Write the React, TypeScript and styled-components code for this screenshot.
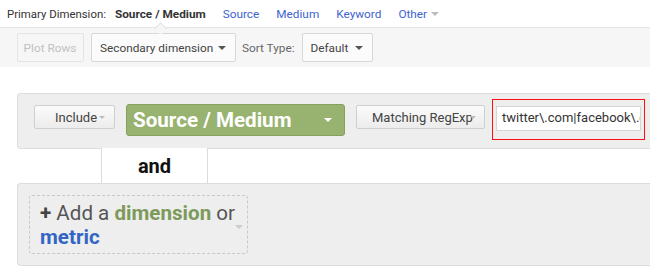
import React from "react";
import styled, { createGlobalStyle } from "styled-components";

const Global = createGlobalStyle`
  html, body { margin: 0; padding: 0; background: #fff; overflow: hidden; }
  body { font-family: Roboto, "Liberation Sans", Arial, sans-serif; width: 650px; height: 266px; }
`;

const Page = styled.div`
  width: 650px;
  height: 266px;
  overflow: hidden;
`;

const Header = styled.div`
  height: 27px;
  display: flex;
  align-items: center;
  padding-left: 7px;
  font-size: 11.8px;
  color: #333;
  white-space: nowrap;
`;

const Label = styled.span`
  font-size: 11.4px;
  margin-right: 9px;
`;

const DimLink = styled.span<{ $active?: boolean }>`
  margin-right: 17px;
  color: ${(p) => (p.$active ? "#333" : "#3e63cf")};
  font-weight: ${(p) => (p.$active ? 700 : 400)};
  position: relative;
  display: inline-flex;
  align-items: center;
`;

const Notch = styled.span`
  position: absolute;
  left: 50%;
  bottom: -12px;
  width: 8px;
  height: 8px;
  margin-left: -4px;
  background: #f6f6f6;
  border-left: 1px solid #e2e2e2;
  border-top: 1px solid #e2e2e2;
  transform: rotate(45deg);
`;

const Caret = styled.span<{ $color?: string; $size?: number; $gap?: number }>`
  display: inline-block;
  flex-shrink: 0;
  width: 0;
  height: 0;
  border-left: ${(p) => p.$size ?? 4}px solid transparent;
  border-right: ${(p) => p.$size ?? 4}px solid transparent;
  border-top: ${(p) => p.$size ?? 4}px solid ${(p) => p.$color ?? "#bbb"};
  margin-left: ${(p) => p.$gap ?? 4}px;
  position: relative;
`;

const Toolbar = styled.div`
  height: 40px;
  background: #f6f6f6;
  border-top: 1px solid #e6e6e6;
  display: flex;
  align-items: center;
  padding-left: 17px;
  box-sizing: border-box;
  white-space: nowrap;
`;

const ToolButton = styled.div<{ $disabled?: boolean; $w: number }>`
  width: ${(p) => p.$w}px;
  flex-shrink: 0;
  height: 29px;
  box-sizing: border-box;
  border: 1px solid ${(p) => (p.$disabled ? "#e4e4e4" : "#d8d8d8")};
  border-radius: 2px;
  background: ${(p) => (p.$disabled ? "#f6f6f6" : "#fbfbfb")};
  color: ${(p) => (p.$disabled ? "#c2c2c2" : "#444")};
  font-size: 11.8px;
  display: flex;
  align-items: center;
  justify-content: ${(p) => (p.$disabled ? "center" : "space-between")};
  padding: 0 9px 0 8px;
  margin-right: 7px;
`;

const SortLabel = styled.span`
  font-size: 11.8px;
  color: #666;
  margin-right: 7px;
  margin-left: -1px;
`;

const Builder = styled.div`
  padding: 26px 0 0 17px;
`;

const Panel = styled.div<{ $h: number }>`
  height: ${(p) => p.$h}px;
  box-sizing: border-box;
  background: #eeeeee;
  border: 1px solid #dcdcdc;
  border-right: none;
  border-radius: 4px 0 0 4px;
  display: flex;
  align-items: flex-start;
  white-space: nowrap;
`;

const ConditionRow = styled(Panel)`
  padding: 11px 0 0 16px;
`;

const GreyButton = styled.div<{ $w: number; $gap: number; $pad: number }>`
  width: ${(p) => p.$w}px;
  flex-shrink: 0;
  height: 24px;
  box-sizing: border-box;
  border: 1px solid #cfcfcf;
  border-radius: 2px;
  background: linear-gradient(#fbfbfb, #ececec);
  color: #444;
  font-size: 13px;
  display: flex;
  align-items: center;
  padding-left: ${(p) => p.$pad}px;
  margin-right: ${(p) => p.$gap}px;
`;

const DimensionPill = styled.div`
  width: 219px;
  flex-shrink: 0;
  height: 32px;
  box-sizing: border-box;
  margin-top: -1px;
  border: 1px solid #86a062;
  border-radius: 3px;
  background: #98b26f;
  color: #fff;
  font-weight: 700;
  font-size: 20.6px;
  display: flex;
  align-items: center;
  justify-content: space-between;
  padding: 0 12px 0 6px;
  margin-right: 11px;
`;

const Highlight = styled.div`
  margin-top: -6px;
  width: 153px;
  flex-shrink: 0;
  height: 41px;
  box-sizing: border-box;
  border: 1px solid #ff1010;
  padding: 6px 3px 0 3px;
`;

const TextInput = styled.div`
  height: 25px;
  box-sizing: border-box;
  border: 1px solid #d6d6d6;
  background: #fff;
  font-size: 13px;
  color: #333;
  white-space: nowrap;
  overflow: hidden;
  padding: 3px 0 0 5px;
`;

const AndTab = styled.div`
  margin-left: 84px;
  width: 107px;
  height: 35px;
  box-sizing: border-box;
  background: #fff;
  border-left: 1px solid #dcdcdc;
  border-right: 1px solid #dcdcdc;
  display: flex;
  align-items: center;
  justify-content: center;
  font-weight: 700;
  font-size: 20px;
  color: #111;
  margin-top: -1px;
`;

const AddRow = styled(Panel)`
  padding: 11px 0 0 11px;
`;

const AddBox = styled.div`
  width: 219px;
  height: 59px;
  box-sizing: border-box;
  border: 1px dashed #c8c8c8;
  border-radius: 3px;
  padding: 5px 6px 0 10px;
  font-size: 20.6px;
  line-height: 24px;
  color: #555;
  position: relative;
  white-space: normal;
`;

const Plus = styled.span`
  font-weight: 700;
  color: #444;
`;

const Green = styled.span`
  font-weight: 700;
  color: #7d9a5a;
`;

const Blue = styled.span`
  font-weight: 700;
  color: #3366c4;
`;

const SmallCaret = styled.span`
  position: absolute;
  right: 4px;
  top: 29px;
  width: 0;
  height: 0;
  border-left: 4px solid transparent;
  border-right: 4px solid transparent;
  border-top: 4px solid #ccc;
`;

export default function App() {
  return (
    <Page>
      <Global />
      <Header>
        <Label>Primary Dimension:</Label>
        <DimLink $active>
          Source / Medium
          <Notch />
        </DimLink>
        <DimLink>Source</DimLink>
        <DimLink>Medium</DimLink>
        <DimLink>Keyword</DimLink>
        <DimLink>
          Other
          <Caret $color="#bbb" />
        </DimLink>
      </Header>
      <Toolbar>
        <ToolButton $disabled $w={67}>Plot Rows</ToolButton>
        <ToolButton $w={145}>
          Secondary dimension
          <Caret $color="#555" />
        </ToolButton>
        <SortLabel>Sort Type:</SortLabel>
        <ToolButton $w={71}>
          Default
          <Caret $color="#555" />
        </ToolButton>
      </Toolbar>
      <Builder>
        <ConditionRow $h={56}>
          <GreyButton $w={81} $gap={11} $pad={20}>
            Include
            <Caret $color="#bbb" $size={3} $gap={2} />
          </GreyButton>
          <DimensionPill>
            Source / Medium
            <Caret $color="#fff" />
          </DimensionPill>
          <GreyButton $w={129} $gap={7} $pad={15}>
            Matching RegExp
            <Caret $color="#bbb" $size={3} $gap={-3} />
          </GreyButton>
          <Highlight>
            <TextInput>twitter\.com|facebook\.com</TextInput>
          </Highlight>
        </ConditionRow>
        <AndTab>and</AndTab>
        <AddRow $h={83}>
          <AddBox>
            <Plus>+</Plus> Add a <Green>dimension</Green> or <Blue>metric</Blue>
            <SmallCaret />
          </AddBox>
        </AddRow>
      </Builder>
    </Page>
  );
}
